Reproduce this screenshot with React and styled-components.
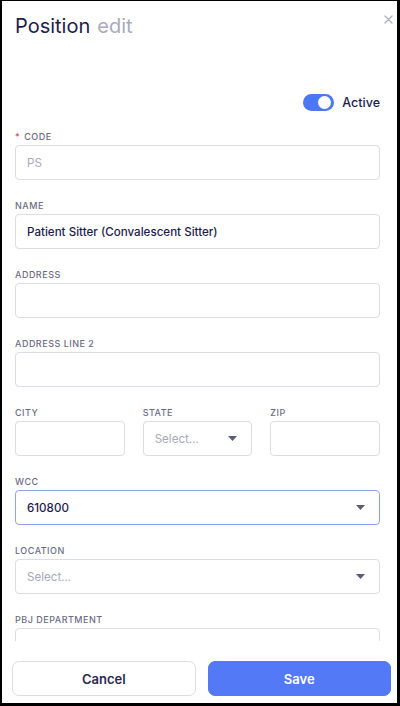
import React from "react";
import styled, { createGlobalStyle } from "styled-components";

const Global = createGlobalStyle`
  html, body { margin: 0; padding: 0; background: #fff; }
  body { font-family: Inter, "Noto Sans", sans-serif; }
  * { box-sizing: border-box; }
`;

const Page = styled.div`
  height: 706px;
  display: flex;
  flex-direction: column;
  border-style: solid;
  border-color: #000;
  border-width: 1px 3px 3px 2px;
  background: #fff;
  overflow: hidden;
`;

const Header = styled.div`
  display: flex;
  justify-content: space-between;
  align-items: flex-start;
  padding: 11px 3px 0 13px;
`;

const Title = styled.h1`
  margin: 0;
  font-size: 20px;
  line-height: 28px;
  font-weight: 400;
  color: #1e1c4e;
`;

const Sub = styled.span`
  color: #aaa9bd;
  margin-left: 7px;
`;

const Close = styled.button`
  border: 0;
  background: none;
  padding: 0;
  margin-top: 1px;
  width: 12px;
  height: 12px;
  display: flex;
  align-items: center;
  justify-content: center;
  cursor: pointer;
`;

const Body = styled.div`
  flex: 1;
  overflow: hidden;
  padding: 52px 17px 0 13px;
`;

const ActiveRow = styled.div`
  display: flex;
  justify-content: flex-end;
  align-items: center;
  gap: 8px;
  height: 20px;
  margin-bottom: 18px;
`;

const Track = styled.div`
  width: 31px;
  height: 17px;
  border-radius: 9px;
  background: #4d78f5;
  position: relative;
`;

const Knob = styled.div`
  position: absolute;
  top: 2px;
  right: 3px;
  width: 13px;
  height: 13px;
  border-radius: 50%;
  background: #fff;
`;

const ActiveText = styled.span`
  font-size: 12.5px;
  font-weight: 500;
  color: #1e1c4e;
`;

const Field = styled.div`
  display: flex;
  flex-direction: column;
  margin-bottom: 19px;
  min-width: 0;
`;

const Label = styled.label`
  display: block;
  font-size: 9px;
  line-height: 14px;
  letter-spacing: 0.5px;
  text-transform: uppercase;
  color: #6d6c84;
  margin-bottom: 1px;
  font-weight: 500;
`;

const Req = styled.span`
  color: #e0434b;
  margin-right: 4px;
`;

const Box = styled.div`
  height: 35px;
  border: 1px solid ${(p) => (p.$focus ? "#8ea4ea" : "#dcdce3")};
  border-radius: 4px;
  display: flex;
  align-items: center;
  justify-content: space-between;
  padding: 0 14px 0 11px;
  font-size: 11.6px;
  font-weight: ${(p) => (p.$placeholder ? 400 : 500)};
  color: ${(p) => (p.$placeholder ? "#a9a8bb" : "#1e1c4e")};
  background: #fff;
`;

const Row3 = styled.div`
  display: grid;
  grid-template-columns: 1fr 1fr 1fr;
  column-gap: 18px;
`;

const Footer = styled.div`
  display: flex;
  gap: 12px;
  padding: 20px 6px 7px 10px;
  background: #fff;
`;

const Btn = styled.button`
  flex: 1;
  height: 35px;
  border-radius: 7px;
  font-family: Inter, "Noto Sans", sans-serif;
  font-size: 13px;
  font-weight: 600;
  cursor: pointer;
  border: 1px solid ${(p) => (p.$primary ? "#5479f7" : "#dcdce3")};
  background: ${(p) => (p.$primary ? "#5479f7" : "#fff")};
  color: ${(p) => (p.$primary ? "#fff" : "#2a2950")};
`;

const Caret = () => (
  <svg width="9" height="5" viewBox="0 0 9 5">
    <path d="M0 0 L9 0 L4.5 5 Z" fill="#5c5b74" />
  </svg>
);

const Input = ({ label, value, placeholder, select, focus, required }) => (
  <Field>
    <Label>
      {required && <Req>*</Req>}
      {label}
    </Label>
    <Box $placeholder={!value} $focus={focus}>
      <span>{value || placeholder || ""}</span>
      {select && <Caret />}
    </Box>
  </Field>
);

export default function App() {
  return (
    <>
      <Global />
      <Page>
        <Header>
          <Title>
            Position<Sub>edit</Sub>
          </Title>
          <Close aria-label="close">
            <svg width="9" height="9" viewBox="0 0 9 9">
              <path d="M1 1 L8 8 M8 1 L1 8" stroke="#aeaec0" strokeWidth="1.3" strokeLinecap="round" />
            </svg>
          </Close>
        </Header>
        <Body>
          <ActiveRow>
            <Track>
              <Knob />
            </Track>
            <ActiveText>Active</ActiveText>
          </ActiveRow>
          <Input label="Code" placeholder="PS" required />
          <Input label="Name" value="Patient Sitter (Convalescent Sitter)" />
          <Input label="Address" />
          <Input label="Address Line 2" />
          <Row3>
            <Input label="City" />
            <Input label="State" placeholder="Select..." select />
            <Input label="Zip" />
          </Row3>
          <Input label="WCC" value="610800" select focus />
          <Input label="Location" placeholder="Select..." select />
          <Input label="PBJ Department" />
        </Body>
        <Footer>
          <Btn>Cancel</Btn>
          <Btn $primary>Save</Btn>
        </Footer>
      </Page>
    </>
  );
}
